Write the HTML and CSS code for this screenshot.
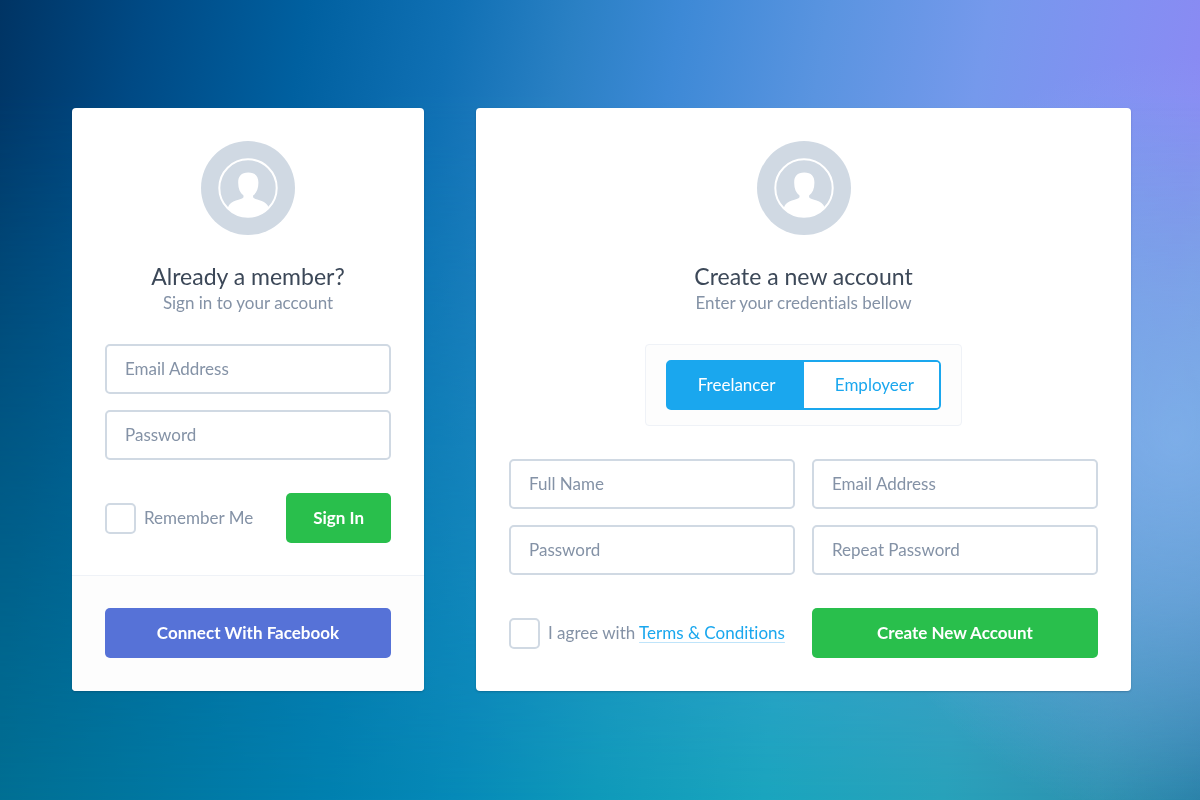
FILE: index.html
```html
<!DOCTYPE html>
<html lang="en">
<head>
<meta charset="utf-8">
<meta name="viewport" content="width=device-width, initial-scale=1">
<title>Sign in or create an account</title>
<link rel="stylesheet" href="styles.css">
</head>
<body>
<svg class="sprite" aria-hidden="true">
  <symbol id="avatar" viewBox="0 0 94 94">
    <clipPath id="ring"><circle cx="47" cy="47" r="29"/></clipPath>
    <circle cx="47" cy="47" r="47" fill="#d0d9e3"/>
    <circle cx="47" cy="47" r="28.7" fill="none" stroke="#fff" stroke-width="2"/>
    <path clip-path="url(#ring)" fill="#fff" d="M47.300 31.500c7.400 0 10.300 4.200 10.100 10.500 0 5.600-1.800 9.900-5.300 12.600v1.700c1.600 3.200 13.200 2.200 15.700 10.400V80H26.800V66.700c2.500-8.200 14.100-7.200 15.700-10.400v-1.700c-3.500-2.700-5.300-7-5.300-12.600-.2-6.300 2.700-10.500 10.100-10.500z"/>
  </symbol>
</svg>
<main class="page">
  <section class="card" aria-labelledby="signin-title">
    <form class="body">
      <header class="intro">
        <svg class="avatar" aria-hidden="true"><use href="#avatar"/></svg>
        <h1 class="title" id="signin-title">Already a member?</h1>
        <p class="subtitle">Sign in to your account</p>
      </header>
      <div class="fields">
        <input class="field" type="email" placeholder="Email Address" aria-label="Email Address">
        <input class="field" type="password" placeholder="Password" aria-label="Password">
      </div>
      <div class="actions">
        <div class="check">
          <input class="box" type="checkbox" id="remember">
          <label for="remember">Remember Me</label>
        </div>
        <button class="button compact" type="submit">Sign In</button>
      </div>
    </form>
    <div class="footer">
      <button class="button facebook" type="button">Connect With Facebook</button>
    </div>
  </section>

  <section class="card" aria-labelledby="signup-title">
    <form class="body">
      <header class="intro">
        <svg class="avatar" aria-hidden="true"><use href="#avatar"/></svg>
        <h2 class="title" id="signup-title">Create a new account</h2>
        <p class="subtitle">Enter your credentials bellow</p>
      </header>
      <div class="switch-panel">
        <div class="switch" role="group" aria-label="Account type">
          <button class="option selected" type="button" aria-pressed="true">Freelancer</button>
          <button class="option" type="button" aria-pressed="false">Employeer</button>
        </div>
      </div>
      <div class="fields two">
        <input class="field" type="text" placeholder="Full Name" aria-label="Full Name">
        <input class="field" type="email" placeholder="Email Address" aria-label="Email Address">
        <input class="field" type="password" placeholder="Password" aria-label="Password">
        <input class="field" type="password" placeholder="Repeat Password" aria-label="Repeat Password">
      </div>
      <div class="actions halves">
        <div class="check">
          <input class="box" type="checkbox" id="agree">
          <label for="agree">I agree with <a class="link" href="#terms">Terms &amp; Conditions</a></label>
        </div>
        <button class="button" type="submit">Create New Account</button>
      </div>
    </form>
  </section>
</main>
</body>
</html>
```
FILE: styles.css
```css
*, *::before, *::after { box-sizing: border-box; }

body {
  margin: 0;
  min-height: 100vh;
  font: 17px/24px Lato, "Liberation Sans", sans-serif;
  font-variant-ligatures: none;
  color: #8492a6;
  background: linear-gradient(96deg, #006f93 6%, #007fae 30%, #068ab8 42%, #0f9aba 53%, #1aa5be 66%, #28a2ba 80%, #2d92b0 92%, #2680a6 100%);
}

/* Upper wash, fading into the teal one below it */
body::before {
  content: "";
  position: fixed;
  inset: 0;
  z-index: -2;
  background: linear-gradient(100deg, #003464 0%, #004a85 11%, #0060a0 23%, #1070b4 34%, #2a80c4 43%, #3d89d6 51%, #5a94e0 62%, #7599ec 74%, #8290f2 84%, #8a8af3 91%, #90a0f0 100%);
  -webkit-mask-image: linear-gradient(#000 0%, #000 12%, transparent 100%);
  mask-image: linear-gradient(#000 0%, #000 12%, transparent 100%);
}

/* Soft light on the right edge */
body::after {
  content: "";
  position: fixed;
  inset: 0;
  z-index: -1;
  background: radial-gradient(ellipse 28% 48% at 98% 55%, rgba(136, 184, 240, .75), rgba(136, 184, 240, .5) 40%, rgba(136, 184, 240, 0) 100%);
}

.sprite { position: absolute; width: 0; height: 0; }

.page {
  min-height: 100vh;
  display: grid;
  grid-template-columns: 352fr 655fr;
  gap: 52px;
  align-content: center;
  padding: 32px 69px 33px 72px;
}

.card {
  display: flex;
  flex-direction: column;
  border-radius: 4px;
  overflow: hidden;
  background: #fff;
  box-shadow: 0 1px 2px rgba(0, 30, 60, .25);
}

.body { padding: 33px 33px 32px; flex: 1; }

.intro { text-align: center; margin-bottom: 29px; }
.avatar { display: block; width: 94px; height: 94px; margin: 0 auto 26px; }
.title { margin: 0; font-size: 23px; line-height: 30px; font-weight: 400; color: #3c4858; }
.subtitle { margin: 0; }

.fields { display: grid; gap: 16px; }
.fields.two { grid-template-columns: 1fr 1fr; column-gap: 17px; }

.field {
  width: 100%;
  height: 50px;
  padding: 0 18px 2px;
  border: 2px solid #d0d9e3;
  border-radius: 5px;
  background: #fff;
  font: inherit;
  color: #3c4858;
}
.field::placeholder { color: #8492a6; opacity: 1; }

.actions {
  display: flex;
  align-items: center;
  justify-content: space-between;
  margin-top: 33px;
}
.actions.halves { display: grid; grid-template-columns: 1fr 1fr; gap: 17px; }

.check { display: flex; align-items: center; gap: 8px; white-space: nowrap; }
.box {
  appearance: none;
  width: 31px;
  height: 31px;
  margin: 0;
  border: 2px solid #d0d9e3;
  border-radius: 5px;
  background: #fff;
}
.box:checked { background: #1aa7ee; }

.link {
  color: #1aa7ee;
  text-decoration: underline 1px #bfe4fa;
  text-underline-offset: 3px;
  text-decoration-skip-ink: none;
}

.button {
  width: 100%;
  height: 50px;
  padding: 0;
  border: 0;
  border-radius: 5px;
  background: #29bf4c;
  color: #fff;
  font: inherit;
  font-weight: 700;
  cursor: pointer;
}
.button.compact { width: auto; padding: 0 27px; }
.button.facebook { background: #5672d7; }

.footer { padding: 32px 33px 33px; border-top: 1px solid #eff2f7; background: #fdfdfd; }

.switch-panel {
  width: fit-content;
  margin: 0 auto 33px;
  padding: 15px 20px;
  border: 1px solid #eff2f7;
  border-radius: 4px;
  background: #fdfdfd;
}
.switch {
  display: grid;
  grid-template-columns: 1fr 1fr;
  border: 2px solid #1aa7ee;
  border-radius: 5px;
}
.option {
  height: 46px;
  padding: 0 25px 0 31px;
  border: 0;
  background: #fff;
  color: #1aa7ee;
  font: inherit;
  cursor: pointer;
  border-radius: 0 3px 3px 0;
}
.option.selected { padding: 0 28px 0 30px; background: #1aa7ee; color: #fff; border-radius: 0; }
```
